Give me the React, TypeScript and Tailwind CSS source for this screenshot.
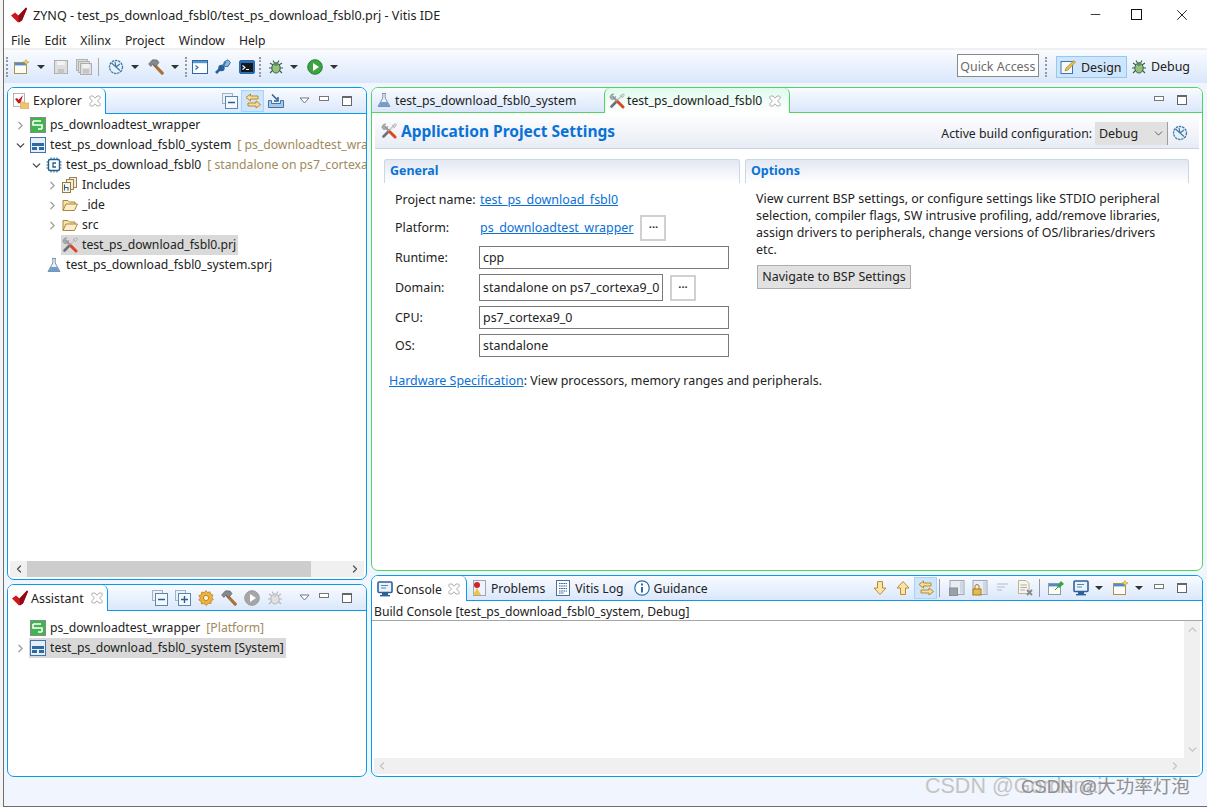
import type { ReactNode } from 'react'
import { ChevronRight, ChevronDown, ChevronLeft, ChevronUp, Minus, X } from 'lucide-react'

const sizeProps = { width: 16, height: 16, viewBox: '0 0 16 16' }

function VitisLogo() {
  return (
    <svg width="17" height="16" viewBox="0 0 17 16">
      <path d="M0 8.5 L4 5.5 L7.5 8.5 L15 0.5 L16 1.5 L11 13.5 L7 15.5 Z" fill="#d0161f" />
      <path d="M7.5 8.5 L15 0.5 L16 1.5 L11 13.5 L8 15.5 Z" fill="#8e0d14" />
    </svg>
  )
}

function CloseTab() {
  return (
    <svg width="12" height="12" viewBox="0 0 12 12">
      <path d="M1.5 1 H4 L6 3.2 L8 1 H10.5 L11 1.5 V3.5 L8.5 6 L11 8.5 V10.5 L10.5 11 H8 L6 8.8 L4 11 H1.5 L1 10.5 V8.5 L3.5 6 L1 3.5 V1.5 Z" fill="#fff" stroke="#a3a3a3" strokeWidth="0.9" />
    </svg>
  )
}

function ExplorerIcon() {
  return (
    <svg {...sizeProps}>
      <rect x="0.5" y="0.5" width="11" height="13" fill="#fff" stroke="#b5b5b5" />
      <path d="M2 6 L4 5 L5.5 7 L10 2 L7.5 10 L5.5 10.5 Z" fill="#c0141c" />
      <path d="M7.5 9 H11 L12 10 H16 V15.5 H7.5 Z" fill="#ecc56d" stroke="#cfa44e" strokeWidth="0.6" />
    </svg>
  )
}

function PlatformIcon() {
  return (
    <svg {...sizeProps}>
      <rect x="0.5" y="0.5" width="15" height="15" fill="#3fb54e" stroke="#8a8a8a" />
      <path d="M3 4 H11 M3 4 V8 H12 V12 M8 12 H12" stroke="#fff" strokeWidth="1.6" fill="none" />
    </svg>
  )
}

function SystemIcon() {
  return (
    <svg {...sizeProps}>
      <rect x="0.5" y="0.5" width="15" height="15" fill="#e6eef7" stroke="#3f75a8" />
      <rect x="2" y="6" width="12" height="3" fill="#2f6a9e" />
      <rect x="2" y="10" width="5" height="3" fill="#2f6a9e" />
      <rect x="9" y="10" width="5" height="3" fill="#2f6a9e" />
    </svg>
  )
}

function ChipIcon() {
  return (
    <svg {...sizeProps}>
      <rect x="2.5" y="2.5" width="11" height="11" rx="1.5" fill="#fff" stroke="#23608f" strokeWidth="1.4" />
      <path d="M5 0.5 V2 M8 0.5 V2 M11 0.5 V2 M5 14 V15.5 M8 14 V15.5 M11 14 V15.5 M0.5 5 H2 M0.5 8 H2 M0.5 11 H2 M14 5 H15.5 M14 8 H15.5 M14 11 H15.5" stroke="#23608f" />
      <path d="M10 6 H7 V10 H10" stroke="#23608f" strokeWidth="1.3" fill="none" />
    </svg>
  )
}

function IncludesIcon() {
  return (
    <svg {...sizeProps}>
      <rect x="7.5" y="0.5" width="7" height="10" fill="#f4ecd6" stroke="#9a8455" />
      <rect x="4.5" y="2.5" width="7" height="10" fill="#f4ecd6" stroke="#9a8455" />
      <rect x="0.5" y="5.5" width="8" height="10" fill="#fbf4df" stroke="#9a7a3c" />
      <path d="M2.5 7.5 V13.5 M2.5 10.5 H6 V13.5" stroke="#2b5f93" strokeWidth="1.1" fill="none" />
    </svg>
  )
}

function FolderIcon() {
  return (
    <svg {...sizeProps}>
      <path d="M1 13.5 V3.5 H6 L7.5 5 H13 V7" fill="#f6e3ae" stroke="#a9873f" />
      <path d="M1 13.5 L4 7 H15.5 L12.5 13.5 Z" fill="#fbeec8" stroke="#a9873f" />
    </svg>
  )
}

function ToolsIcon() {
  return (
    <svg {...sizeProps}>
      <path d="M13 2.5 L8.5 7" stroke="#c9ccd0" strokeWidth="2" />
      <path d="M11.5 2.5 L14.5 0.8 L15.4 1.8 L13.6 4.6 Z" fill="#e2e4e6" stroke="#7c7f83" strokeWidth="0.5" />
      <path d="M8 8 L2.5 13.5" stroke="#6c6f73" strokeWidth="2.6" strokeLinecap="round" />
      <path d="M3.5 3.5 L9 9" stroke="#9a9da1" strokeWidth="2.4" />
      <path d="M0.8 4.5 A3.8 3.8 0 0 1 4.8 0.8 L3.2 3 L4.8 4.8 L6.8 3.2 A3.8 3.8 0 0 1 2.4 6.6 Z" fill="#a8abb0" stroke="#77797d" strokeWidth="0.4" />
      <path d="M9 9 L14 14" stroke="#d9481f" strokeWidth="3" strokeLinecap="round" />
    </svg>
  )
}

function FlaskIcon() {
  return (
    <svg {...sizeProps}>
      <path d="M6 1.5 H10 M6.8 1.5 V6 L2 14.5 H14 L9.2 6 V1.5" fill="#eef3f9" stroke="#7f93ad" />
      <path d="M4.6 10 H11.4 L13.4 14 H2.6 Z" fill="#6f9ed1" />
    </svg>
  )
}

function HammerIcon() {
  return (
    <svg {...sizeProps}>
      <path d="M6.5 6 L14.2 14.2" stroke="#a9713a" strokeWidth="3.2" strokeLinecap="round" />
      <path d="M0.6 5 L4.5 0.8 L9 1 L11 3.6 L7.8 7.6 L5 5.2 L2.8 7.4 Z" fill="#85898e" stroke="#55585c" strokeWidth="0.6" />
    </svg>
  )
}

function BugIcon({ off }: { off?: boolean }) {
  const c = off ? '#b5b5b5' : '#3f5a45'
  return (
    <svg {...sizeProps}>
      <path d="M2 4 L5 6 M14 4 L11 6 M1 9 H4 M15 9 H12 M2 14 L5 11 M14 14 L11 11 M5 1.5 L6.5 4 M11 1.5 L9.5 4" stroke={c} strokeWidth="1.1" />
      <ellipse cx="8" cy="9" rx="4.2" ry="5" fill={off ? '#e1e1e1' : '#8fc27d'} stroke={c} />
      <circle cx="8" cy="5" r="2" fill={off ? '#ccc' : '#5d8a5f'} />
    </svg>
  )
}

function PlayIcon({ off }: { off?: boolean }) {
  return (
    <svg {...sizeProps}>
      <circle cx="8" cy="8" r="7.3" fill={off ? '#a6a6a6' : '#3ba33f'} stroke={off ? '#999' : '#2e7f35'} />
      <path d="M6 4 L12 8 L6 12 Z" fill="#fff" />
    </svg>
  )
}

function GearIcon() {
  return (
    <svg {...sizeProps}>
      <path d="M8 0.5 L9.5 2.5 L12 1.8 L12.6 4.2 L15 5 L13.8 7.5 L15.4 9.5 L13 11 L13 13.5 L10.4 13.4 L8 15.5 L6.2 13.5 L3.5 14 L3.2 11.4 L0.8 10 L2.3 8 L0.8 5.5 L3.3 4.7 L3.8 2 L6.3 2.6 Z" fill="#edb23e" stroke="#bd8420" strokeWidth="0.8" />
      <circle cx="8" cy="8" r="2.6" fill="#fff6dc" stroke="#bd8420" />
    </svg>
  )
}

function WheelIcon() {
  return (
    <svg {...sizeProps}>
      <circle cx="8" cy="8" r="6.5" fill="#e9f1f8" stroke="#3f79ab" strokeWidth="1.3" strokeDasharray="2.4 0.8" />
      <path d="M3.5 4 L12 11.5 M7 3 L8 8 M12 5 L8 8" stroke="#3f79ab" strokeWidth="1.2" />
    </svg>
  )
}

function NewIcon() {
  return (
    <svg {...sizeProps}>
      <rect x="1.5" y="3.5" width="12" height="11" fill="#fffdf3" stroke="#a89257" />
      <rect x="2" y="4" width="11" height="2.4" fill="#4d8bc9" />
      <path d="M13 0.5 L14 2.5 L16 3 L14 4 L13 6.5 L12 4 L10 3 L12 2.5 Z" fill="#f6d55c" stroke="#b58c22" strokeWidth="0.5" />
    </svg>
  )
}

function SaveIcon({ stacked }: { stacked?: boolean }) {
  return (
    <svg {...sizeProps}>
      {stacked && <rect x="0.5" y="0.5" width="11" height="11" fill="#dcdcdc" stroke="#b3b3b3" />}
      {stacked && <rect x="2.5" y="2.5" width="11" height="11" fill="#dcdcdc" stroke="#b3b3b3" />}
      <rect x={stacked ? 4.5 : 1.5} y={stacked ? 4.5 : 1.5} width={stacked ? 11 : 13} height={stacked ? 11 : 13} fill="#dedede" stroke="#aeaeae" />
      <rect x={stacked ? 6.5 : 4} y={stacked ? 5 : 2} width={stacked ? 7 : 8} height="4" fill="#f2f2f2" />
      <rect x={stacked ? 7 : 5} y="10" width="6" height="4.5" fill="#c5c5c5" />
    </svg>
  )
}

function TerminalIcon({ dark }: { dark?: boolean }) {
  return (
    <svg {...sizeProps}>
      <rect x="0.5" y="1.5" width="15" height="13" rx={dark ? 1.5 : 0} fill={dark ? '#2e6db4' : '#fff'} stroke="#2a6aa8" />
      {dark ? <rect x="2" y="4" width="12" height="9" fill="#14181f" /> : <rect x="1" y="2" width="14" height="2.2" fill="#5a95cc" />}
      <path d="M3.5 6.5 L6 8.5 L3.5 10.5" stroke={dark ? '#fff' : '#2a6aa8'} fill="none" strokeWidth="1.1" />
      {dark && <path d="M7 10.5 H10" stroke="#fff" />}
    </svg>
  )
}

function ConnectIcon() {
  return (
    <svg {...sizeProps}>
      <path d="M1 14 L5 10" stroke="#2a5f93" strokeWidth="2.6" />
      <circle cx="6.5" cy="9" r="3.2" fill="#2a5f93" />
      <path d="M9 3 L13 0.8 L15.4 3.5 L13 7.5 L9.5 7.5 Z" fill="#8db8de" stroke="#3a75ad" />
      <path d="M7 7 L11 3" stroke="#3a75ad" strokeWidth="1.4" />
    </svg>
  )
}

function DesignIcon() {
  return (
    <svg {...sizeProps}>
      <rect x="1" y="2.5" width="11.5" height="12" fill="#f5f8fc" stroke="#3f74a6" />
      <path d="M5 12 L6 9 L14 1.5 L15.5 3 L8 11 Z" fill="#eec14f" stroke="#a5802a" strokeWidth="0.7" />
    </svg>
  )
}

function CollapseIcon({ plus }: { plus?: boolean }) {
  return (
    <svg {...sizeProps}>
      <rect x="0.5" y="0.5" width="10" height="10" fill="#eaf0f7" stroke="#9db4cb" />
      <rect x="3.5" y="3.5" width="12" height="12" fill="#f4f8fc" stroke="#5b86ae" />
      <path d="M6 9.5 H13" stroke="#2d5f8e" strokeWidth="1.4" />
      {plus && <path d="M9.5 6 V13" stroke="#2d5f8e" strokeWidth="1.4" />}
    </svg>
  )
}

function SyncArrows() {
  return (
    <svg {...sizeProps}>
      <path d="M1 4.5 L5.5 1 V3 H13 V6 H5.5 V8 Z" fill="#f7dd9d" stroke="#b98a2c" />
      <path d="M15.5 11.5 L11 8 V10 H3 V13 H11 V15 Z" fill="#f7dd9d" stroke="#b98a2c" />
    </svg>
  )
}

function ImportIcon() {
  return (
    <svg {...sizeProps}>
      <path d="M0.5 7.5 H3.5 V10.5 H12.5 V7.5 H15.5 V14.5 H0.5 Z" fill="#a9c6e2" stroke="#3f74a6" />
      <path d="M4 1.5 L9 6.5 M6 8 H10 V4" stroke="#2d5f8e" strokeWidth="1.5" fill="none" />
    </svg>
  )
}

function ArrowIcon({ up }: { up?: boolean }) {
  return (
    <svg {...sizeProps}>
      <path d={up ? 'M8 1.5 L14 8 H10.5 V14.5 H5.5 V8 H2 Z' : 'M8 14.5 L14 8 H10.5 V1.5 H5.5 V8 H2 Z'} fill="#fbe3a8" stroke="#bd8c2d" />
    </svg>
  )
}

function ProblemsIcon() {
  return (
    <svg {...sizeProps}>
      <rect x="2.5" y="0.5" width="12" height="15" fill="#f1f3f8" stroke="#9aa6bc" />
      <circle cx="6" cy="5" r="3" fill="#d1202a" />
      <path d="M6 8 L10 15 H2 Z" fill="#f3c23f" />
    </svg>
  )
}

function LogIcon() {
  return (
    <svg {...sizeProps}>
      <rect x="1.5" y="0.5" width="13" height="15" fill="#fff" stroke="#4e6f95" />
      <path d="M4 3.5 H12 M4 6 H12 M4 8.5 H12 M4 11 H12 M4 13 H9" stroke="#33609a" strokeDasharray="1.6 0.6" />
    </svg>
  )
}

function InfoIcon() {
  return (
    <svg {...sizeProps}>
      <circle cx="8" cy="8" r="7.2" fill="#fff" stroke="#2b6da8" strokeWidth="1.2" />
      <rect x="7" y="7" width="2" height="5.5" fill="#2b6da8" />
      <rect x="7" y="3.5" width="2" height="2" fill="#2b6da8" />
    </svg>
  )
}

function MonitorIcon() {
  return (
    <svg {...sizeProps}>
      <rect x="1" y="1" width="14" height="10.5" rx="1" fill="#eaf2fa" stroke="#2f6198" strokeWidth="1.6" />
      <path d="M4 4.5 H11 M4 7 H9" stroke="#5b86ae" />
      <rect x="5" y="12" width="6" height="2" fill="#2f6198" />
      <rect x="3" y="14" width="10" height="1.4" fill="#2f6198" />
    </svg>
  )
}

function PinIcon() {
  return (
    <svg {...sizeProps}>
      <rect x="0.5" y="3.5" width="12" height="11" fill="#fffdf3" stroke="#8a9cb0" />
      <rect x="1" y="4" width="11" height="2.4" fill="#4d8bc9" />
      <path d="M9 6 L13 1 L16 4 L11 8 Z" fill="#3aa14a" />
      <path d="M7 10 L10 7" stroke="#3aa14a" />
    </svg>
  )
}

function ConsoleToolIcon({ kind }: { kind: 'save' | 'lock' | 'lines' | 'del' }) {
  if (kind === 'lines') {
    return (
      <svg {...sizeProps}>
        <path d="M2 4 H13 M2 7 H10 M2 10 H7" stroke="#b7bec8" strokeWidth="1.2" />
      </svg>
    )
  }
  if (kind === 'del') {
    return (
      <svg {...sizeProps}>
        <path d="M1.5 0.5 H9 L12 3.5 V13.5 H1.5 Z" fill="#f8f5ea" stroke="#c0b48c" />
        <path d="M3.5 5 H10 M3.5 7.5 H10 M3.5 10 H8" stroke="#a8aeb5" />
        <path d="M10 10 L15 15 M15 10 L10 15" stroke="#8a8a8a" strokeWidth="2" />
      </svg>
    )
  }
  return (
    <svg {...sizeProps}>
      <rect x="1" y="0.5" width="14" height="14" fill="#e8eef4" stroke="#9aa8b8" />
      <rect x="11" y="1.5" width="3" height="12" fill="#cfd8e2" />
      {kind === 'save' ? (
        <rect x="0.5" y="8" width="8" height="7.5" fill="#9aa0a8" stroke="#8a8f96" />
      ) : (
        <g>
          <rect x="1" y="9" width="8" height="6" fill="#e9b94d" stroke="#a57c22" />
          <path d="M3 9 V6.5 A2 2 0 0 1 7 6.5 V9" fill="none" stroke="#a57c22" />
        </g>
      )}
    </svg>
  )
}

function Caret({ className }: { className: string }) {
  return <span className={`w-0 h-0 shrink-0 border-x-[4px] border-x-transparent border-t-[4px] border-t-[#333] ${className}`} />
}

function Grip({ className }: { className: string }) {
  return <span className={`w-[2px] h-[20px] shrink-0 border-l-2 border-dotted border-[#999] ${className}`} />
}

function PanelControls({ menu }: { menu?: boolean }) {
  return (
    <div className="flex items-center">
      {menu && (
        <svg width="11" height="7" viewBox="0 0 11 7" className="mr-[9px]">
          <path d="M1 1 H10 L5.5 6 Z" fill="#fff" stroke="#777" />
        </svg>
      )}
      <span className="w-[10px] h-[5px] border border-[#777] bg-white mr-[13px] mb-1" />
      <span className="w-[10px] h-[10px] border border-[#666] border-t-2 bg-white" />
    </div>
  )
}

function TreeRow({ indent, arrow, icon, label, note, selected }: { indent: string; arrow?: 'right' | 'down'; icon: ReactNode; label: string; note?: string; selected?: boolean }) {
  return (
    <div className={`flex items-center h-5 whitespace-nowrap text-[12.2px] ${indent}`}>
      <span className="w-[17px] flex justify-center shrink-0">
        {arrow === 'right' && <ChevronRight size={13} strokeWidth={2.4} className="text-[#a0a0a0]" />}
        {arrow === 'down' && <ChevronDown size={13} strokeWidth={2.4} className="text-[#444]" />}
      </span>
      <span className={`flex items-center h-5 ${selected ? 'bg-[#d9d9d9]' : ''}`}>
        <span className="w-4 h-4 ml-[1px] mr-[4px] shrink-0">{icon}</span>
        <span className="text-[#222] pr-[2px] pt-[1px]">{label}</span>
      </span>
      {note && <span className="text-[#a08a5c] ml-[4px] pt-[1px]">{note}</span>}
    </div>
  )
}

function SectionHead({ title }: { title: string }) {
  return (
    <div className="h-6 border border-b-0 border-[#c9d7e6] rounded-t-[3px] bg-gradient-to-b from-[#e3e8f2] to-white px-[5px] flex items-center font-bold text-[#0a72d6]">
      {title}
    </div>
  )
}

function EllipsisButton({ className }: { className: string }) {
  return (
    <span className={`w-[26px] h-[26px] border-2 border-[#d0d0d0] bg-white flex items-center justify-center text-[#333] font-bold text-[11px] leading-none pb-[3px] ${className}`}>
      ···
    </span>
  )
}

function Field({ value, className }: { value: string; className: string }) {
  return <div className={`border border-[#7a7a7a] bg-white px-[3px] pt-[2px] flex items-center text-[#222] whitespace-nowrap ${className}`}>{value}</div>
}

function ToolIcon({ children, className = '' }: { children: ReactNode; className?: string }) {
  return <span className={`w-4 h-4 shrink-0 ${className}`}>{children}</span>
}

export default function App() {
  return (
    <div className="w-[1207px] h-[807px] overflow-hidden bg-white relative flex font-['Noto_Sans',sans-serif] text-[12.45px] text-[#222] leading-none">
      <div className="w-[3px] shrink-0 bg-[#f4f4f4]" />
      <div className="flex-1 min-w-0 flex flex-col border-l border-b border-[#6d6d6d]">
        {/* title bar */}
        <div className="h-[29px] shrink-0 flex items-center">
          <span className="ml-[7px] mr-[5px]"><VitisLogo /></span>
          <span className="text-[#222] text-[12.6px] pt-[3px]">ZYNQ - test_ps_download_fsbl0/test_ps_download_fsbl0.prj - Vitis IDE</span>
          <div className="ml-auto flex items-center text-[#111]">
            <Minus size={15} strokeWidth={1.3} className="mr-[28px]" />
            <span className="w-[11px] h-[11px] border border-[#111] mr-[31px]" />
            <X size={18} strokeWidth={1.2} className="mr-[16px]" />
          </div>
        </div>
        {/* menu */}
        <div className="h-[19px] shrink-0 flex items-center pl-[7px] pt-[6px] gap-[14px] text-[12.2px]">
          {['File', 'Edit', 'Xilinx', 'Project', 'Window', 'Help'].map(m => (
            <span key={m}>{m}</span>
          ))}
        </div>
        {/* toolbar */}
        <div className="h-[35px] shrink-0 border-t-2 border-[#f0f0f0] bg-gradient-to-b from-[#fafcff] to-[#d9e7fb] flex items-center">
          <Grip className="ml-[2px]" />
          <ToolIcon className="ml-[5px]"><NewIcon /></ToolIcon>
          <Caret className="ml-[8px]" />
          <ToolIcon className="ml-[8px]"><SaveIcon /></ToolIcon>
          <ToolIcon className="ml-[7px]"><SaveIcon stacked /></ToolIcon>
          <span className="w-px h-[18px] bg-[#a9a9a9] ml-[6px]" />
          <ToolIcon className="ml-[9px]"><WheelIcon /></ToolIcon>
          <Caret className="ml-[7px]" />
          <ToolIcon className="ml-[9px]"><HammerIcon /></ToolIcon>
          <Caret className="ml-[7px]" />
          <Grip className="ml-[6px]" />
          <ToolIcon className="ml-[5px]"><TerminalIcon /></ToolIcon>
          <ToolIcon className="ml-[7px]"><ConnectIcon /></ToolIcon>
          <ToolIcon className="ml-[8px]"><TerminalIcon dark /></ToolIcon>
          <Grip className="ml-[4px]" />
          <ToolIcon className="ml-[7px]"><BugIcon /></ToolIcon>
          <Caret className="ml-[6px]" />
          <ToolIcon className="ml-[9px]"><PlayIcon /></ToolIcon>
          <Caret className="ml-[7px]" />
          <div className="ml-auto w-[82px] h-[23px] border border-[#8a8a8a] bg-white flex items-center justify-center pt-[3px] text-[#6b6b6b] mb-[2px]">Quick Access</div>
          <Grip className="ml-[6px]" />
          <div className="ml-[9px] w-[71px] h-[22px] bg-[#cfe5fb] border border-[#90c8f6] flex items-center pl-[3px] gap-[5px]">
            <DesignIcon />
            <span className="pt-[3px]">Design</span>
          </div>
          <div className="ml-[4px] flex items-center gap-[4px] mr-[17px]">
            <BugIcon />
            <span className="pt-[2px]">Debug</span>
          </div>
        </div>
        {/* perspective */}
        <div className="flex-1 min-h-0 bg-[#f1f5fe] flex gap-[4px] pt-[4px] pl-[3px] pr-[4px] pb-[29px]">
          {/* left column */}
          <div className="w-[360px] shrink-0 flex flex-col gap-[4px]">
            <div className="h-[493px] shrink-0 border border-[#0a9be8] rounded-[7px] bg-white flex flex-col overflow-hidden">
              <div className="h-[26px] shrink-0 flex bg-gradient-to-b from-[#f9fbff] to-[#d9e7fb]">
                <div className="w-[98px] h-[26px] bg-white border-r border-[#0a9be8] rounded-tr-[6px] flex items-center pl-[5px]">
                  <ExplorerIcon />
                  <span className="ml-[4px] text-[#222]">Explorer</span>
                  <span className="ml-[7px] flex"><CloseTab /></span>
                </div>
                <div className="flex-1 border-b border-[#0a9be8] flex items-center">
                  <ToolIcon className="ml-[116px]"><CollapseIcon /></ToolIcon>
                  <span className="ml-[3px] w-[23px] h-[22px] bg-[#cfe5fb] border border-[#a9d3f7] flex items-center justify-center"><SyncArrows /></span>
                  <ToolIcon className="ml-[4px]"><ImportIcon /></ToolIcon>
                  <span className="ml-[15px]"><PanelControls menu /></span>
                </div>
              </div>
              <div className="flex-1 min-h-0 pt-[1px] overflow-hidden">
                <TreeRow indent="pl-[4px]" arrow="right" icon={<PlatformIcon />} label="ps_downloadtest_wrapper" />
                <TreeRow indent="pl-[4px]" arrow="down" icon={<SystemIcon />} label="test_ps_download_fsbl0_system" note="[ ps_downloadtest_wrapper ]" />
                <TreeRow indent="pl-[20px]" arrow="down" icon={<ChipIcon />} label="test_ps_download_fsbl0" note="[ standalone on ps7_cortexa9_0 ]" />
                <TreeRow indent="pl-[36px]" arrow="right" icon={<IncludesIcon />} label="Includes" />
                <TreeRow indent="pl-[36px]" arrow="right" icon={<FolderIcon />} label="_ide" />
                <TreeRow indent="pl-[36px]" arrow="right" icon={<FolderIcon />} label="src" />
                <TreeRow indent="pl-[36px]" icon={<ToolsIcon />} label="test_ps_download_fsbl0.prj" selected />
                <TreeRow indent="pl-[20px]" icon={<FlaskIcon />} label="test_ps_download_fsbl0_system.sprj" />
              </div>
              <div className="h-[16px] shrink-0 mx-[2px] mb-[2px] bg-[#f0f0f0] flex items-center pl-[3px] pr-[3px]">
                <ChevronLeft size={12} strokeWidth={2.6} className="text-[#555]" />
                <span className="ml-[2px] w-[284px] h-[16px] bg-[#cdcdcd]" />
                <ChevronRight size={12} strokeWidth={2.6} className="text-[#555] ml-auto" />
              </div>
            </div>
            <div className="flex-1 min-h-0 border border-[#0a9be8] rounded-[7px] bg-white flex flex-col overflow-hidden">
              <div className="h-[26px] shrink-0 flex bg-gradient-to-b from-[#f9fbff] to-[#d9e7fb]">
                <div className="w-[100px] h-[26px] bg-white border-r border-[#0a9be8] rounded-tr-[6px] flex items-center pl-[4px]">
                  <VitisLogo />
                  <span className="ml-[2px] pt-[2px] text-[#222]">Assistant</span>
                  <span className="ml-[7px] flex"><CloseTab /></span>
                </div>
                <div className="flex-1 border-b border-[#0a9be8] flex items-center">
                  <ToolIcon className="ml-[44px]"><CollapseIcon /></ToolIcon>
                  <ToolIcon className="ml-[7px]"><CollapseIcon plus /></ToolIcon>
                  <ToolIcon className="ml-[7px]"><GearIcon /></ToolIcon>
                  <ToolIcon className="ml-[7px]"><HammerIcon /></ToolIcon>
                  <ToolIcon className="ml-[7px]"><PlayIcon off /></ToolIcon>
                  <ToolIcon className="ml-[7px]"><BugIcon off /></ToolIcon>
                  <span className="ml-[16px]"><PanelControls menu /></span>
                </div>
              </div>
              <div className="pt-[7px]">
                <TreeRow indent="pl-[4px]" icon={<PlatformIcon />} label="ps_downloadtest_wrapper" note="[Platform]" />
                <div className="flex items-center h-5 pl-[4px] whitespace-nowrap text-[12.2px]">
                  <span className="w-[17px] flex justify-center"><ChevronRight size={13} strokeWidth={2.4} className="text-[#a0a0a0]" /></span>
                  <span className="flex items-center h-5 bg-[#d9d9d9] pr-[2px]">
                    <span className="w-4 h-4 ml-[1px] mr-[4px]"><SystemIcon /></span>
                    <span className="pt-[1px]">test_ps_download_fsbl0_system [System]</span>
                  </span>
                </div>
              </div>
            </div>
          </div>
          {/* right column */}
          <div className="flex-1 min-w-0 flex flex-col gap-[4px]">
            <div className="h-[484px] shrink-0 border border-[#4fd65f] rounded-[7px] bg-white flex flex-col overflow-hidden">
              <div className="h-[25px] shrink-0 flex bg-gradient-to-b from-[#f9fbff] to-[#d9e7fb] text-[12.2px]">
                <div className="w-[232px] border-b border-[#4fd65f] flex items-center pl-[4px]">
                  <FlaskIcon />
                  <span className="ml-[3px] pt-[2px]">test_ps_download_fsbl0_system</span>
                </div>
                <div className="w-[186px] border-x border-[#4fd65f] rounded-t-[6px] bg-gradient-to-b from-[#dffbee] to-white flex items-center pl-[4px]">
                  <ToolsIcon />
                  <span className="ml-[2px] pt-[2px]">test_ps_download_fsbl0</span>
                  <span className="ml-[7px] flex"><CloseTab /></span>
                </div>
                <div className="flex-1 border-b border-[#4fd65f] flex items-center justify-end pr-[15px]">
                  <PanelControls />
                </div>
              </div>
              <div className="flex-1 min-h-0 flex flex-col">
                <div className="h-[36px] shrink-0 mx-[3px] bg-gradient-to-b from-white to-[#e8ecf5] border-b border-[#c7d3e0] flex items-center pl-[6px]">
                  <ToolsIcon />
                  <span className="ml-[4px] pt-[3px] text-[15.5px] font-bold text-[#0a72d6]">Application Project Settings</span>
                  <span className="ml-auto pt-[7px] text-[12.25px]">Active build configuration:</span>
                  <div className="ml-[3px] mt-[5px] w-[73px] h-[23px] bg-[#e1e1e1] border-r border-[#9e9e9e] flex items-center justify-between pl-[4px] pr-[2px]">
                    <span className="pt-[2px]">Debug</span>
                    <ChevronDown size={13} strokeWidth={1.5} className="text-[#444]" />
                  </div>
                  <span className="ml-[4px] mr-[11px] mt-[5px]"><WheelIcon /></span>
                </div>
                <div className="flex pt-[10px] pl-[12px] gap-[5px] pr-[12px]">
                  <div className="w-[356px] shrink-0">
                    <SectionHead title="General" />
                    <div className="pl-[11px]">
                      <div className="flex items-center h-[23px] mt-[5px]">
                        <span className="w-[85px] pt-[2px]">Project name:</span>
                        <span className="text-[#0a6fd6] underline pt-[2px]">test_ps_download_fsbl0</span>
                      </div>
                      <div className="flex items-center h-[28px] mt-[3px]">
                        <span className="w-[85px]">Platform:</span>
                        <span className="text-[#0a6fd6] underline">ps_downloadtest_wrapper</span>
                        <EllipsisButton className="ml-[7px]" />
                      </div>
                      <div className="flex items-center mt-[4px]">
                        <span className="w-[84px] pt-[2px]">Runtime:</span>
                        <Field value="cpp" className="w-[250px] h-[23px]" />
                      </div>
                      <div className="flex items-center mt-[5px]">
                        <span className="w-[84px] pt-[2px]">Domain:</span>
                        <Field value="standalone on ps7_cortexa9_0" className="w-[184px] h-[27px]" />
                        <EllipsisButton className="ml-[7px]" />
                      </div>
                      <div className="flex items-center mt-[5px]">
                        <span className="w-[84px] pt-[2px]">CPU:</span>
                        <Field value="ps7_cortexa9_0" className="w-[250px] h-[23px]" />
                      </div>
                      <div className="flex items-center mt-[5px]">
                        <span className="w-[84px] pt-[2px]">OS:</span>
                        <Field value="standalone" className="w-[250px] h-[23px]" />
                      </div>
                    </div>
                    <div className="mt-[18px] pl-[5px] whitespace-nowrap">
                      <span className="text-[#0a6fd6] underline">Hardware Specification</span>: View processors, memory ranges and peripherals.
                    </div>
                  </div>
                  <div className="w-[444px] shrink-0">
                    <SectionHead title="Options" />
                    <div className="pl-[11px] pt-[7px] leading-[17px] w-[425px]">
                      View current BSP settings, or configure settings like STDIO peripheral selection, compiler flags, SW intrusive profiling, add/remove libraries, assign drivers to peripherals, change versions of OS/libraries/drivers etc.
                    </div>
                    <div className="ml-[12px] mt-[7px] w-[154px] h-[24px] bg-[#e1e1e1] border border-[#adadad] flex items-center justify-center">Navigate to BSP Settings</div>
                  </div>
                </div>
              </div>
            </div>
            <div className="flex-1 min-h-0 border border-[#0a9be8] rounded-[7px] bg-white flex flex-col overflow-hidden">
              <div className="h-[25px] shrink-0 flex bg-gradient-to-b from-[#f9fbff] to-[#d9e7fb] text-[12.2px]">
                <div className="w-[95px] bg-white border-r border-[#0a9be8] rounded-tr-[6px] flex items-center pl-[5px]">
                  <MonitorIcon />
                  <span className="ml-[3px] pt-[3px]">Console</span>
                  <span className="ml-[6px] flex"><CloseTab /></span>
                </div>
                <div className="flex-1 border-b border-[#0a9be8] flex items-center">
                  <ToolIcon className="ml-[4px]"><ProblemsIcon /></ToolIcon>
                  <span className="ml-[4px] pt-[3px]">Problems</span>
                  <ToolIcon className="ml-[10px]"><LogIcon /></ToolIcon>
                  <span className="ml-[4px] pt-[3px]">Vitis Log</span>
                  <ToolIcon className="ml-[10px]"><InfoIcon /></ToolIcon>
                  <span className="ml-[4px] pt-[3px]">Guidance</span>
                  <ToolIcon className="ml-auto"><ArrowIcon /></ToolIcon>
                  <ToolIcon className="ml-[7px]"><ArrowIcon up /></ToolIcon>
                  <span className="ml-[3px] w-[23px] h-[22px] bg-[#cfe5fb] border border-[#a9d3f7] flex items-center justify-center"><SyncArrows /></span>
                  <span className="ml-[2px] w-px h-[18px] bg-[#999]" />
                  <ToolIcon className="ml-[9px]"><ConsoleToolIcon kind="save" /></ToolIcon>
                  <ToolIcon className="ml-[7px]"><ConsoleToolIcon kind="lock" /></ToolIcon>
                  <ToolIcon className="ml-[7px]"><ConsoleToolIcon kind="lines" /></ToolIcon>
                  <ToolIcon className="ml-[6px]"><ConsoleToolIcon kind="del" /></ToolIcon>
                  <span className="ml-[6px] w-px h-[18px] bg-[#999]" />
                  <ToolIcon className="ml-[8px]"><PinIcon /></ToolIcon>
                  <ToolIcon className="ml-[9px]"><MonitorIcon /></ToolIcon>
                  <Caret className="ml-[6px]" />
                  <ToolIcon className="ml-[9px]"><NewIcon /></ToolIcon>
                  <Caret className="ml-[7px]" />
                  <span className="ml-[11px] mr-[15px]"><PanelControls /></span>
                </div>
              </div>
              <div className="h-[20px] shrink-0 flex items-center pl-[2px] pt-[3px] border-b border-[#a6a6a6] text-[12.2px]">Build Console [test_ps_download_fsbl0_system, Debug]</div>
              <div className="flex-1 min-h-0 flex">
                <div className="flex-1" />
                <div className="w-[16px] mr-[2px] bg-[#f0f0f0] flex flex-col justify-between items-center py-[2px]">
                  <ChevronUp size={13} strokeWidth={2.6} className="text-[#c4c4c4]" />
                  <ChevronDown size={13} strokeWidth={2.6} className="text-[#c4c4c4]" />
                </div>
              </div>
              <div className="h-[16px] shrink-0 mr-[2px] ml-[2px] mb-[2px] bg-[#f0f0f0] flex items-center justify-between pl-[2px] pr-[19px]">
                <ChevronLeft size={12} strokeWidth={2.6} className="text-[#c4c4c4]" />
                <ChevronRight size={12} strokeWidth={2.6} className="text-[#c4c4c4]" />
              </div>
            </div>
          </div>
        </div>
      </div>
      {/* watermark */}
      <span className="absolute left-[925px] top-[776px] text-[21.5px] text-[#c4c4c4] font-['Liberation_Sans',sans-serif] whitespace-nowrap">CSDN @Gordenai</span>
      <span className="absolute left-[1021px] top-[778px] text-[18.5px] text-[#909090] font-['Liberation_Sans','Noto_Sans_CJK_SC',sans-serif] whitespace-nowrap">CSDN @大功率灯泡</span>
    </div>
  )
}
